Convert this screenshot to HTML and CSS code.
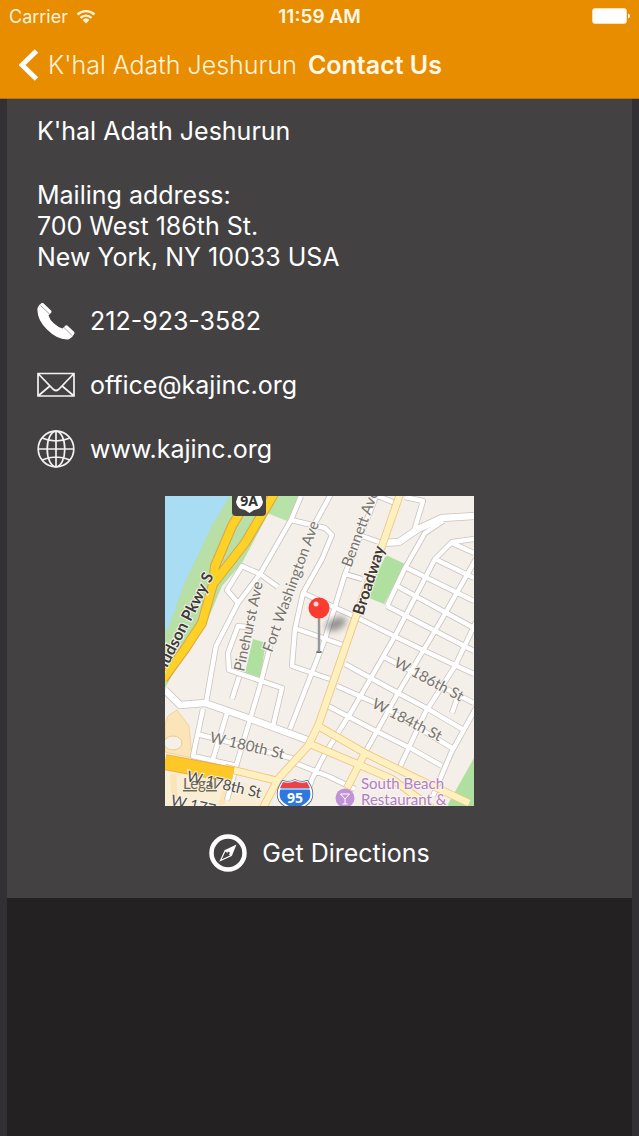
FILE: index.html
```html
<!DOCTYPE html>
<html lang="en">
<head>
    <meta charset="UTF-8">
    <meta name="viewport" content="width=device-width, initial-scale=1.0">
    <title>Contact Us - K'hal Adath Jeshurun</title>
    <link rel="stylesheet" href="styles.css">
</head>
<body>
    <header class="top-bar">
        <div class="status-bar">
            <div class="carrier">
                <span>Carrier</span>
                <svg class="wifi" viewBox="0 0 20 15" aria-hidden="true">
                    <path d="M1.5 5.500a12.500 12.500 0 0 1 17 0M4.500 8.800a8 8 0 0 1 11 0" fill="none" stroke="currentColor" stroke-width="2.400"/>
                    <path d="M10 14.500l-3.400-3.600a5 5 0 0 1 6.800 0z" fill="currentColor"/>
                </svg>
            </div>
            <div class="clock">11:59 AM</div>
            <svg class="battery" viewBox="0 0 38 16" aria-hidden="true">
                <rect x="0.5" y="0.5" width="34" height="15" rx="2.5" fill="#fff" stroke="#fbdcae"/>
                <path d="M36 5.500q2 .8 2 2.500t-2 2.500z" fill="#fff"/>
            </svg>
        </div>
        <nav class="nav-bar">
            <button class="back" type="button">
                <svg class="chevron" viewBox="0 0 20 32" aria-hidden="true">
                    <path d="M17.500 2L3 16l14.500 14" fill="none" stroke="#fff" stroke-width="5"/>
                </svg>
                <span>K'hal Adath Jeshurun</span>
            </button>
            <h1>Contact Us</h1>
        </nav>
    </header>

    <main class="page">
        <section class="panel">
            <p class="name">K'hal Adath Jeshurun</p>
            <address>
                Mailing address:<br>
                700 West 186th St.<br>
                New York, NY 10033 USA
            </address>

            <ul class="contacts">
                <li>
                    <a href="tel:212-923-3582">
                        <svg class="icon" viewBox="0 0 38 38" aria-hidden="true">
                            <path d="M.5 6Q1.500 3 5 .8L6.500 1.200 14.500 9 14.300 10.500 11.500 13.500Q12.500 17.500 17 21.500 21.500 25.500 25.500 26.500L28.500 23.500 30 23.300 37.300 30 37.500 31.500Q35.500 35.500 32 37.300 21 38.500 10 27.500-.5 17 .5 6z" fill="#fff"/>
                            <path d="M3.500 3.500l9 8.500M26.500 25l8.500 8.500" stroke="#8a8889" stroke-width="0.800"/>
                        </svg>
                        <span>212-923-3582</span>
                    </a>
                </li>
                <li>
                    <a href="mailto:office@kajinc.org">
                        <svg class="icon" viewBox="0 0 38 38" aria-hidden="true" fill="none" stroke="#f2f2f2" stroke-width="1.700">
                            <path d="M1 7.500h36v22.500H1zM1 7.500L16.500 23.500q2.500 2 5 0L37 7.500M1 30l12.500-10.500M37 30L24.500 19.500"/>
                        </svg>
                        <span>office@kajinc.org</span>
                    </a>
                </li>
                <li>
                    <a href="http://www.kajinc.org">
                        <svg class="icon" viewBox="0 0 38 38" aria-hidden="true" fill="none" stroke="#f2f2f2" stroke-width="1.700">
                            <circle cx="19" cy="19" r="17.800"/>
                            <ellipse cx="19" cy="19" rx="8.800" ry="17.800"/>
                            <path d="M19 1v36M1 19h36M5 8q14 6 28 0M5 30q14-6 28 0"/>
                        </svg>
                        <span>www.kajinc.org</span>
                    </a>
                </li>
            </ul>

            <svg class="map" viewBox="0 0 309 310" role="img" aria-label="Map of Washington Heights">
                <defs>
                    <path id="streets" d="M136 0L126 24 95 78 73 107 51 150 41 207M126 24L160 32 167 39 157 63 138 97 130 133 127 170 165 183
                        M166 -2L148 31M95 78L77 70 62 94 73 107M95 78L113 91
                        M138 97L193 122 227 139 260 155 309 178M132 133L178 149M212 -2L180 78 160 143 125 233M180 78L197 83
                        M90 132L73 130 63 157 64 174 117 192 108 230M74 181L67 203M105 150L95 190 72 267 62 304
                        M38 213L28 260 72 270M62 217L48 263M32 238L130 263M130 267L165 281 190 293M163 252L147 283 138 310
                        M197 40L217 47M213 0L230 7M240 1L258 5 249 35
                        M278 25L260 37 240 72 222 110M309 43L287 46 270 63 230 140 188 213 163 253
                        M311 63L277 123 233 197 200 257M311 126L290 170 260 217 232 277M311 212L286 257 268 300
                        M287 47L309 57M270 63L309 82M242 72L309 105M232 90L309 132M222 110L309 155
                        M217 160L309 207M180 168L233 197 263 213 297 233M172 190L217 210 287 252M163 210L207 233 247 253 277 270
                        M293 200L287 217"/>
                    <path id="avenues" d="M0 194L15 209 40 207 83 222 145 245M309 20L277 22 253 33 234 46 217 47"/>
                    <path id="main-roads" d="M235 -2L217 50 190 123 153 230 143 250 113 283 98 312M153 230L200 257 253 283 304 307M145 248L197 270 227 283 267 312M200 257L182 292M60 272L113 285"/>
                    <path id="parkway" d="M109 -2L80 47 48 88 37 127 20 153 -2 183M80 8L67 30 50 70 48 88"/>
                    <filter id="soft" x="-50%" y="-50%" width="200%" height="200%"><feGaussianBlur stdDeviation="3"/></filter>
                </defs>

                <rect width="309" height="310" fill="#f4efe8"/>
                <path d="M0 0H115L102 20 77 67 57 90 40 130 20 157 0 192z" fill="#b7dfa6"/>
                <path d="M0 0H65L47 29 33 59 20 86 3 132 0 135z" fill="#a8ddf3"/>
                <path d="M110 0H136L122 25 102 17z" fill="#b7e2a8"/>
                <path d="M221 59L240 68 219 108 204 102 211 79zM88 143L101 147 95 181 80 177zM309 262L282 310H309z" fill="#b0e0a0"/>
                <path d="M3 220L12 214 24 230 27 262 0 256V228z" fill="#fbe5b8" stroke="#f2d29b"/>
                <path d="M0 275L66 284 100 290 100 310 0 310z" fill="#f9eed3"/>
                <path d="M8 278L10 310M62 288L56 310" fill="none" stroke="#fbe5b8" stroke-width="6"/>
                <ellipse cx="8" cy="247" rx="9" ry="7" fill="#f4efe8" stroke="#f0c98a"/>

                <g class="roads">
                    <use href="#streets" stroke="#cbc2bf" stroke-width="6"/>
                    <use href="#avenues" stroke="#cbc2bf" stroke-width="8"/>
                    <use href="#streets" stroke="#fff" stroke-width="4.400"/>
                    <use href="#avenues" stroke="#fff" stroke-width="6.400"/>
                    <use href="#main-roads" stroke="#f2c27c" stroke-width="8"/>
                    <use href="#main-roads" stroke="#fff1bf" stroke-width="6.400"/>
                    <path d="M0 266L68 279" stroke="#eeaa32" stroke-width="16"/>
                    <path d="M0 266L68 279" stroke="#fdc827" stroke-width="14"/>
                    <use href="#parkway" stroke="#dda349" stroke-width="10"/>
                    <use href="#parkway" stroke="#fdd125" stroke-width="8"/>
                </g>

                <g class="labels">
                    <text class="strong" text-anchor="end" transform="translate(49 80) rotate(-63)">Hudson Pkwy S</text>
                    <text transform="translate(79 176) rotate(-78)">Pinehurst Ave</text>
                    <text transform="translate(107 157) rotate(-70)">Fort Washington Ave</text>
                    <text transform="translate(186 72) rotate(-70)">Bennett Ave</text>
                    <text class="strong" transform="translate(198 120) rotate(-72)">Broadway</text>
                    <text transform="translate(228 170) rotate(28)">W 186th St</text>
                    <text transform="translate(206 211) rotate(27)">W 184th St</text>
                    <text transform="translate(44 246) rotate(13)">W 180th St</text>
                    <text class="dark" transform="translate(21 285) rotate(13)">W 178th St</text>
                    <text class="dark" transform="translate(5 309) rotate(13)">W 177th St</text>
                    <text class="place" x="196" y="293">South Beach</text>
                    <text class="place" x="196" y="309">Restaurant &amp;</text>
                    <text class="legal" x="18" y="293">Legal</text>
                </g>

                <circle cx="180" cy="302" r="9.500" fill="#c193d6"/>
                <path d="M175.500 298h9l-4.500 5zM180 303v5M177.500 308h5" fill="none" stroke="#fff"/>

                <!-- route shields -->
                <path d="M67 0H101V16Q101 20 97 20H71Q67 20 67 16z" fill="#444342"/>
                <path d="M73 0H96Q97 3 98 6 97 13 89 14L84.500 17 80 14Q72 13 71 6z" fill="#fff"/>
                <text class="shield" x="84" y="10" fill="#333">9A</text>
                <path d="M118 286Q124 288 130 285 136 288 142 286 149 296 145 304 142 309 130 314 118 309 115 304 111 296 118 286z" fill="#2e70d8" stroke="#4a5f8a" stroke-width="3.500"/>
                <path d="M118 286Q124 288 130 285 136 288 142 286 149 296 145 304 142 309 130 314 118 309 115 304 111 296 118 286z" fill="#2e78de" stroke="#fff" stroke-width="2"/>
                <path d="M118 286Q124 288 130 285 136 288 142 286L145 292H115z" fill="#e8424a"/>
                <path d="M114 293H146" stroke="#fff"/>
                <text class="shield" x="130" y="307" fill="#fff">95</text>

                <!-- pin -->
                <ellipse cx="171" cy="128" rx="11" ry="6" transform="rotate(-25 171 128)" fill="#555" opacity="0.600" filter="url(#soft)"/>
                <ellipse cx="154" cy="156" rx="3" ry="1" fill="#555"/>
                <path d="M154 120V156" stroke="#999" stroke-width="2.500"/>
                <circle cx="154" cy="112" r="10.500" fill="#fc3b30"/>
                <circle cx="151" cy="108" r="2.500" fill="#ffd5d2"/>
            </svg>

            <a class="directions" href="#directions">
                <svg class="icon" viewBox="0 0 38 38" aria-hidden="true">
                    <circle cx="19" cy="19" r="16.500" fill="none" stroke="#fff" stroke-width="4.500"/>
                    <path d="M27.500 10.500L23 21.500 20.500 19.500 18 17.500 16 16z" fill="#fff"/>
                    <path d="M16.200 16.500l6 5L11.500 26.500z" fill="none" stroke="#fff" stroke-width="1.200"/>
                    <circle cx="19.500" cy="19" r="1.200" fill="#434142"/>
                </svg>
                <span>Get Directions</span>
            </a>
        </section>
    </main>
</body>
</html>
```
FILE: styles.css
```css
* {
    box-sizing: border-box;
}

body {
    margin: 0;
    min-height: 100vh;
    display: flex;
    flex-direction: column;
    font-family: Inter, "Liberation Sans", sans-serif;
    font-size: 25px;
    line-height: 31px;
    background: #323032;
    color: #fff;
}

.top-bar {
    background: #e88c00;
    border-bottom: 1px solid #b57414;
}

.status-bar {
    display: grid;
    grid-template-columns: 1fr auto 1fr;
    align-items: center;
    height: 32px;
    padding: 0 9px;
    font-size: 18px;
}

.carrier {
    display: flex;
    align-items: center;
    gap: 8px;
    color: #fff3dc;
}

.wifi {
    width: 20px;
    height: 15px;
}

.clock {
    color: #fff8ea;
    font-size: 19px;
    font-weight: 600;
}

.battery {
    width: 38px;
    height: 16px;
    justify-self: end;
}

.nav-bar {
    display: flex;
    align-items: center;
    gap: 11px;
    height: 66px;
    padding: 0 19px;
}

.back {
    display: flex;
    align-items: center;
    gap: 9px;
    padding: 0;
    border: none;
    background: none;
    color: #fff3dc;
    font: inherit;
    font-weight: 300;
    cursor: pointer;
}

.chevron {
    width: 20px;
    height: 32px;
}

h1 {
    margin: 0;
    font-size: 25px;
    font-weight: 600;
    color: #fff8ea;
}

.page {
    flex: 1;
    margin: 0 7px;
    background: #232122;
}

.panel {
    padding: 17px 30px 26px;
    background: #434142;
}

.name {
    margin: 0 0 33px;
}

address {
    margin-bottom: 29px;
    font-style: normal;
}

.contacts {
    display: flex;
    flex-direction: column;
    gap: 26px;
    margin: 0 0 28px;
    padding: 0;
    list-style: none;
}

.panel a {
    display: flex;
    align-items: center;
    gap: 15px;
    color: #fff;
    text-decoration: none;
}

.icon {
    flex: none;
    width: 38px;
    height: 38px;
}

.map {
    display: block;
    width: 309px;
    height: 310px;
    margin: 0 auto 28px;
}

.panel .directions {
    justify-content: center;
}

.roads {
    fill: none;
    stroke-linejoin: round;
}

.labels {
    font-family: Lato, sans-serif;
    font-size: 15px;
    font-weight: 400;
    fill: #77736f;
    stroke: #f8f4ee;
    stroke-width: 2px;
    paint-order: stroke;
}

.labels .strong {
    fill: #3c3a38;
    font-size: 16px;
    font-weight: 700;
}

.labels .dark {
    fill: #4f4c49;
}

.labels .place {
    fill: #b07fc6;
}

.labels .legal {
    fill: #6d6b58;
    stroke: none;
    text-decoration: underline;
}

.shield {
    font-family: "Noto Sans", sans-serif;
    font-size: 14px;
    font-weight: 700;
    text-anchor: middle;
}
```
